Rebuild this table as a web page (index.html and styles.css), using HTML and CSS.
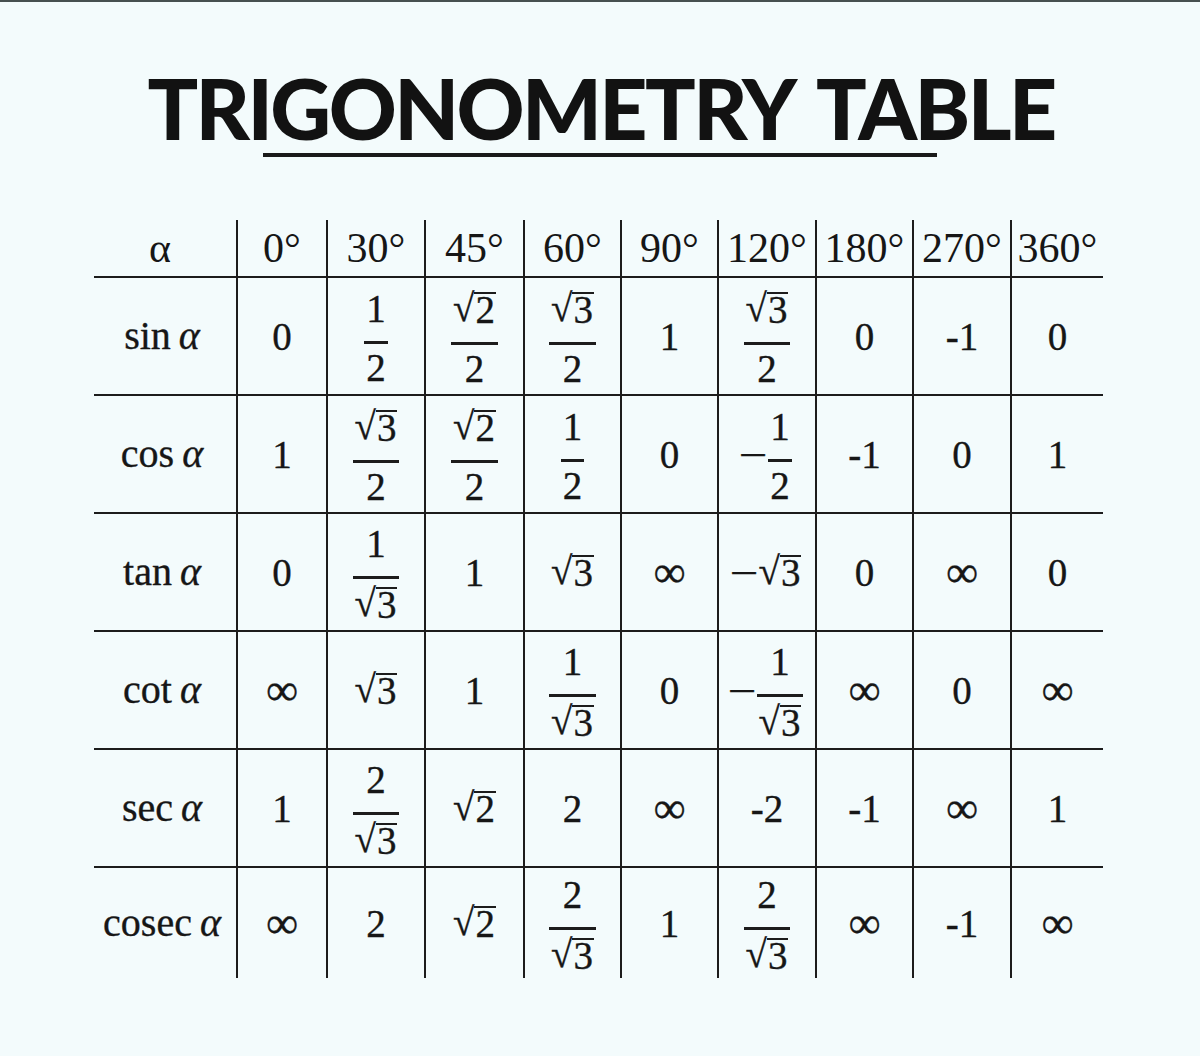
FILE: index.html
```html
<!DOCTYPE html>
<html lang="en">
<head>
<meta charset="utf-8">
<title>Trigonometry Table</title>
<link rel="stylesheet" href="styles.css">
</head>
<body>
<div class="page">
  <h1 class="title">TRIGONOMETRY TABLE</h1>
  <div class="rule"></div>

  <div class="table">
    <div class="row head">
      <div class="cell label">α</div>
      <div class="cell">0°</div>
      <div class="cell">30°</div>
      <div class="cell">45°</div>
      <div class="cell">60°</div>
      <div class="cell">90°</div>
      <div class="cell">120°</div>
      <div class="cell">180°</div>
      <div class="cell">270°</div>
      <div class="cell">360°</div>
    </div>

    <div class="row">
      <div class="cell label"><span>sin</span><i>α</i></div>
      <div class="cell">0</div>
      <div class="cell"><span class="frac"><span class="num">1</span><span class="bar"></span><span class="den">2</span></span></div>
      <div class="cell"><span class="frac"><span class="num"><span class="sqrt"><span class="rad">√</span><span class="rc">2</span></span></span><span class="bar"></span><span class="den">2</span></span></div>
      <div class="cell"><span class="frac"><span class="num"><span class="sqrt"><span class="rad">√</span><span class="rc">3</span></span></span><span class="bar"></span><span class="den">2</span></span></div>
      <div class="cell">1</div>
      <div class="cell"><span class="frac"><span class="num"><span class="sqrt"><span class="rad">√</span><span class="rc">3</span></span></span><span class="bar"></span><span class="den">2</span></span></div>
      <div class="cell">0</div>
      <div class="cell">-1</div>
      <div class="cell">0</div>
    </div>

    <div class="row">
      <div class="cell label"><span>cos</span><i>α</i></div>
      <div class="cell">1</div>
      <div class="cell"><span class="frac"><span class="num"><span class="sqrt"><span class="rad">√</span><span class="rc">3</span></span></span><span class="bar"></span><span class="den">2</span></span></div>
      <div class="cell"><span class="frac"><span class="num"><span class="sqrt"><span class="rad">√</span><span class="rc">2</span></span></span><span class="bar"></span><span class="den">2</span></span></div>
      <div class="cell"><span class="frac"><span class="num">1</span><span class="bar"></span><span class="den">2</span></span></div>
      <div class="cell">0</div>
      <div class="cell"><span class="minus">−</span><span class="frac"><span class="num">1</span><span class="bar"></span><span class="den">2</span></span></div>
      <div class="cell">-1</div>
      <div class="cell">0</div>
      <div class="cell">1</div>
    </div>

    <div class="row">
      <div class="cell label"><span>tan</span><i>α</i></div>
      <div class="cell">0</div>
      <div class="cell"><span class="frac"><span class="num">1</span><span class="bar"></span><span class="den"><span class="sqrt"><span class="rad">√</span><span class="rc">3</span></span></span></span></div>
      <div class="cell">1</div>
      <div class="cell"><span class="sqrt"><span class="rad">√</span><span class="rc">3</span></span></div>
      <div class="cell"><span class="inf">∞</span></div>
      <div class="cell"><span class="minus">−</span><span class="sqrt"><span class="rad">√</span><span class="rc">3</span></span></div>
      <div class="cell">0</div>
      <div class="cell"><span class="inf">∞</span></div>
      <div class="cell">0</div>
    </div>

    <div class="row">
      <div class="cell label"><span>cot</span><i>α</i></div>
      <div class="cell"><span class="inf">∞</span></div>
      <div class="cell"><span class="sqrt"><span class="rad">√</span><span class="rc">3</span></span></div>
      <div class="cell">1</div>
      <div class="cell"><span class="frac"><span class="num">1</span><span class="bar"></span><span class="den"><span class="sqrt"><span class="rad">√</span><span class="rc">3</span></span></span></span></div>
      <div class="cell">0</div>
      <div class="cell"><span class="minus">−</span><span class="frac"><span class="num">1</span><span class="bar"></span><span class="den"><span class="sqrt"><span class="rad">√</span><span class="rc">3</span></span></span></span></div>
      <div class="cell"><span class="inf">∞</span></div>
      <div class="cell">0</div>
      <div class="cell"><span class="inf">∞</span></div>
    </div>

    <div class="row">
      <div class="cell label"><span>sec</span><i>α</i></div>
      <div class="cell">1</div>
      <div class="cell"><span class="frac"><span class="num">2</span><span class="bar"></span><span class="den"><span class="sqrt"><span class="rad">√</span><span class="rc">3</span></span></span></span></div>
      <div class="cell"><span class="sqrt"><span class="rad">√</span><span class="rc">2</span></span></div>
      <div class="cell">2</div>
      <div class="cell"><span class="inf">∞</span></div>
      <div class="cell">-2</div>
      <div class="cell">-1</div>
      <div class="cell"><span class="inf">∞</span></div>
      <div class="cell">1</div>
    </div>

    <div class="row last">
      <div class="cell label"><span>cosec</span><i>α</i></div>
      <div class="cell"><span class="inf">∞</span></div>
      <div class="cell">2</div>
      <div class="cell"><span class="sqrt"><span class="rad">√</span><span class="rc">2</span></span></div>
      <div class="cell"><span class="frac"><span class="num">2</span><span class="bar"></span><span class="den"><span class="sqrt"><span class="rad">√</span><span class="rc">3</span></span></span></span></div>
      <div class="cell">1</div>
      <div class="cell"><span class="frac"><span class="num">2</span><span class="bar"></span><span class="den"><span class="sqrt"><span class="rad">√</span><span class="rc">3</span></span></span></span></div>
      <div class="cell"><span class="inf">∞</span></div>
      <div class="cell">-1</div>
      <div class="cell"><span class="inf">∞</span></div>
    </div>
  </div>
</div>
</body>
</html>
```

FILE: styles.css
```css
* {
  box-sizing: border-box;
}

html, body {
  margin: 0;
  padding: 0;
  background: #f3fbfc;
}

.page {
  width: 1200px;
  height: 1056px;
  border-top: 2px solid #465050;
  color: #161616;
  overflow: hidden;
}

.title {
  margin: 64px 0 0;
  height: 84px;
  font-family: Lato, "Liberation Sans", sans-serif;
  font-weight: 900;
  font-size: 84px;
  line-height: 84px;
  text-align: center;
  color: #121212;
  letter-spacing: -2.6px;
  word-spacing: 10px;
  text-indent: 2px;
}

.rule {
  width: 674px;
  height: 4px;
  margin: 3px 0 0 263px;
  background: #1a1a1a;
}

.table {
  margin: 63px 0 0 94px;
  width: 1009px;
  font-family: "Liberation Serif", "Times New Roman", serif;
  font-size: 39px;
  color: #161616;
  -webkit-text-stroke: 0.35px #161616;
}

.row {
  display: grid;
  grid-template-columns: 144px 90px 98px 99px 97px 97px 98px 97px 98px 91px;
  height: 118px;
  border-bottom: 2px solid #1c1c1c;
}

.row.head {
  height: 58px;
  font-size: 42px;
  -webkit-text-stroke: 0;
}

.row.last {
  height: 110px;
  border-bottom: none;
}

.cell {
  display: flex;
  align-items: center;
  justify-content: center;
  border-right: 2px solid #1c1c1c;
  line-height: 1;
  white-space: nowrap;
}

.cell:last-child {
  border-right: none;
}

.head .cell {
  align-items: flex-start;
  padding-top: 7px;
}

.label {
  font-size: 40px;
  gap: 8px;
  padding-right: 6px;
}

.head .label {
  font-size: 42px;
  padding-right: 10px;
}

.frac {
  display: inline-flex;
  flex-direction: column;
  align-items: center;
  margin-top: 4px;
}

.num, .den {
  display: block;
  line-height: 32px;
  padding: 0 2px;
}

.bar {
  display: block;
  align-self: stretch;
  height: 3px;
  margin: 16px 0 8px;
  background: #1c1c1c;
}

.sqrt {
  display: inline-flex;
  align-items: flex-start;
}

.rad {
  display: inline-block;
  line-height: 32px;
}

.rc {
  display: inline-block;
  line-height: 32px;
  border-top: 2.5px solid #1c1c1c;
  padding: 0 1px;
}

.minus {
  display: inline-block;
  transform: scaleX(1.3);
  margin: 0 4px 0 0;
}

.inf {
  font-size: 45px;
}
```
